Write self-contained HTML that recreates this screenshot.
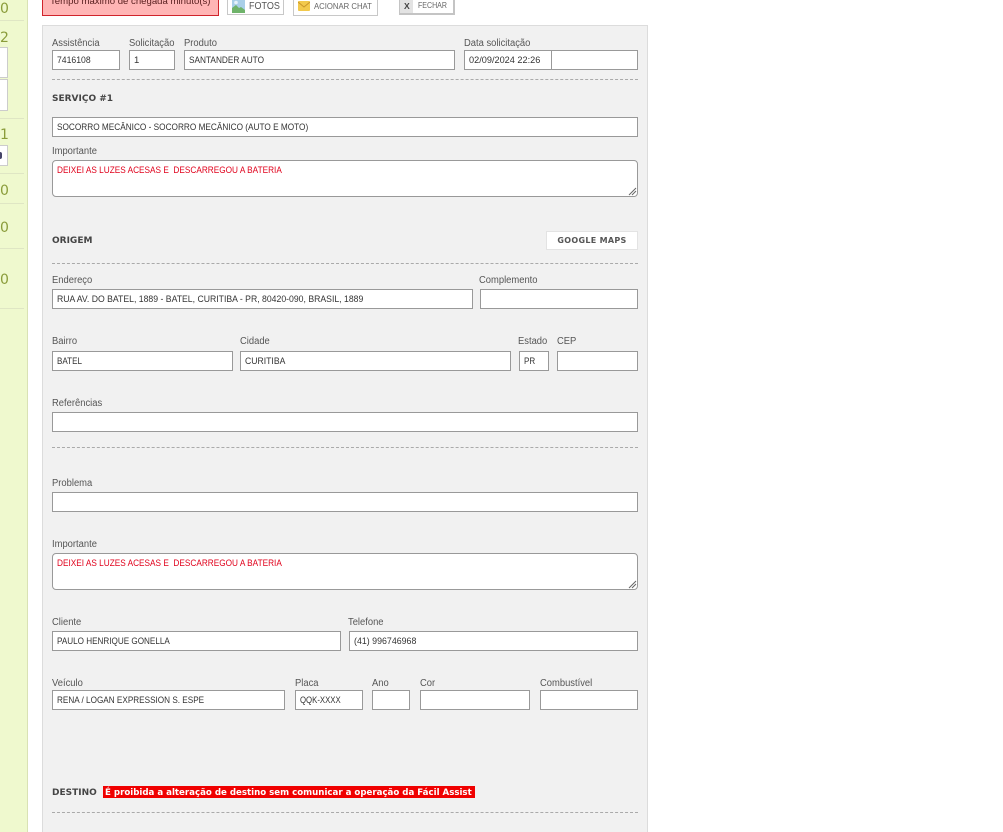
<!DOCTYPE html>
<html lang="pt-BR">
<head>
<meta charset="utf-8">
<title>Assistência</title>
<style>
html,body{margin:0;padding:0;background:#fff;width:1003px;height:832px;overflow:hidden;}
body{position:relative;font-family:"Liberation Sans",sans-serif;font-size:10px;color:#444;}
div{position:absolute;box-sizing:border-box;white-space:pre;}
span{display:inline-block;transform-origin:0 50%;white-space:pre;}
.l{height:12px;line-height:12px;font-size:10px;color:#555;transform:scaleX(.94);transform-origin:0 0;}
.i{height:20px;background:#fff;border:1px solid #999;line-height:20px;padding-left:4px;font-size:9.5px;color:#333;}
.t{background:#fff;border:1px solid #999;border-radius:4px;padding:4px 0 0 4px;line-height:12px;font-size:9.5px;color:#e0001b;}
.d{left:52px;width:586px;height:0;border-top:1px dashed #aaa;}
.h{left:52px;font-weight:bold;line-height:12px;height:12px;color:#444;font-family:"DejaVu Sans",sans-serif;font-size:9px;}
.n{left:0;font-size:14px;line-height:16px;color:#8a9c3a;width:9px;font-family:"DejaVu Sans",sans-serif;}
.s{left:0;width:24px;height:1px;background:#dfe6c4;}
.b{background:#fff;border:1px solid #c8c8c8;}
</style>
</head>
<body>
<!-- sidebar -->
<div style="left:0;top:0;width:28px;height:832px;background:#eff9ce;border-right:1px solid #d9e2b4;"></div>
<div class="n" style="top:1px">0</div>
<div class="s" style="top:20px"></div>
<div class="n" style="top:30px">2</div>
<div style="left:0;top:47px;width:8px;height:31px;background:#fff;border:1px solid #ccc;border-left:0;"></div>
<div style="left:0;top:79px;width:8px;height:32px;background:#fff;border:1px solid #ccc;border-left:0;"></div>
<div class="s" style="top:118px"></div>
<div class="n" style="top:127px">1</div>
<div style="left:0;top:145px;width:8px;height:21px;background:#fff;border:1px solid #ccc;border-left:0;"></div>
<div style="left:0;top:152px;width:2px;height:7px;background:#446;border-radius:0 4px 4px 0;"></div>
<div class="s" style="top:173px"></div>
<div class="n" style="top:183px">0</div>
<div class="s" style="top:203px"></div>
<div class="n" style="top:220px">0</div>
<div class="s" style="top:248px"></div>
<div class="n" style="top:272px">0</div>
<div class="s" style="top:308px"></div>

<!-- top bar -->
<div style="left:42px;top:-6px;width:177px;height:22px;background:#ffb5b5;border:1px solid #d0242c;line-height:14px;padding-left:7px;font-size:9.6px;color:#5a2020;">Tempo máximo de chegada minuto(s)</div>
<div class="b" style="left:227px;top:-4px;width:57px;height:19px;"></div>
<svg style="position:absolute;left:232px;top:-1px" width="13" height="14" viewBox="0 0 13 14"><rect width="13" height="14" fill="#a9cfe8"/><path d="M0 14V9l4-3 3 3 2-1 4 3v3z" fill="#6fb36a"/><circle cx="4" cy="3.500" r="1.800" fill="#e6f2fa"/></svg>
<div style="left:249px;top:0;height:12px;line-height:13px;font-size:10px;color:#555;transform:scaleX(.9);transform-origin:0 0;">FOTOS</div>
<div class="b" style="left:293px;top:-4px;width:85px;height:20px;"></div>
<svg style="position:absolute;left:298px;top:1px" width="12" height="10" viewBox="0 0 12 10"><rect width="12" height="10" rx="1" fill="#f2c94c"/><path d="M0 1l6 5 6-5" fill="none" stroke="#c9962a" stroke-width="1"/></svg>
<div style="left:314px;top:0;height:12px;line-height:12px;font-size:8.6px;color:#666;transform:scaleX(.9);transform-origin:0 0;">ACIONAR CHAT</div>
<div class="b" style="left:399px;top:-4px;width:56px;height:19px;border-color:#c4c4c4;border-width:1px 2px 2px 1px;"></div>
<div style="left:400px;top:0;width:13px;height:13px;background:#e3e3e3;"></div>
<div style="left:404px;top:0;height:12px;line-height:12px;font-size:8.6px;font-weight:bold;color:#444;">X</div>
<div style="left:418px;top:0;height:12px;line-height:12px;font-size:8px;color:#666;transform:scaleX(.88);transform-origin:0 0;">FECHAR</div>

<!-- panel -->
<div style="left:42px;top:25px;width:606px;height:807px;background:#f1f1f1;border:1px solid #dcdcdc;border-bottom:0;"></div>

<div class="l" style="left:52px;top:38px">Assistência</div>
<div class="l" style="left:129px;top:38px">Solicitação</div>
<div class="l" style="left:184px;top:38px">Produto</div>
<div class="l" style="left:464px;top:38px">Data solicitação</div>
<div class="i" style="left:52px;top:50px;width:68px"><span style="transform:scaleX(.91)">7416108</span></div>
<div class="i" style="left:129px;top:50px;width:46px">1</div>
<div class="i" style="left:184px;top:50px;width:271px"><span style="transform:scaleX(.87)">SANTANDER AUTO</span></div>
<div class="i" style="left:464px;top:50px;width:88px"><span style="transform:scaleX(.965)">02/09/2024 22:26</span></div>
<div class="i" style="left:551px;top:50px;width:87px"></div>
<div class="d" style="top:79px"></div>

<div class="h" style="top:93px">SERVIÇO #1</div>
<div class="i" style="left:52px;top:117px;width:586px"><span style="transform:scaleX(.868)">SOCORRO MECÂNICO - SOCORRO MECÂNICO (AUTO E MOTO)</span></div>
<div class="l" style="left:52px;top:146px">Importante</div>
<div class="t" style="left:52px;top:160px;width:586px;height:37px"><span style="transform:scaleX(.868)">DEIXEI AS LUZES ACESAS E  DESCARREGOU A BATERIA</span><svg style="position:absolute;right:0;bottom:0" width="9" height="9" viewBox="0 0 9 9"><path d="M1 8L8 1M4 8L8 4" stroke="#666" stroke-width="1" fill="none"/></svg></div>

<div class="h" style="top:235px">ORIGEM</div>
<div style="left:546px;top:231px;width:92px;height:19px;background:#fff;border:1px solid #e3e3e3;text-align:center;line-height:17px;font-family:'DejaVu Sans',sans-serif;font-weight:bold;font-size:8px;letter-spacing:.3px;color:#555;">GOOGLE MAPS</div>
<div class="d" style="top:263px"></div>

<div class="l" style="left:52px;top:275px">Endereço</div>
<div class="l" style="left:479px;top:275px">Complemento</div>
<div class="i" style="left:52px;top:289px;width:421px"><span style="transform:scaleX(.913)">RUA AV. DO BATEL, 1889 - BATEL, CURITIBA - PR, 80420-090, BRASIL, 1889</span></div>
<div class="i" style="left:480px;top:289px;width:158px"></div>

<div class="l" style="left:52px;top:336px">Bairro</div>
<div class="l" style="left:240px;top:336px">Cidade</div>
<div class="l" style="left:518px;top:336px">Estado</div>
<div class="l" style="left:557px;top:336px">CEP</div>
<div class="i" style="left:52px;top:351px;width:181px"><span style="transform:scaleX(.85)">BATEL</span></div>
<div class="i" style="left:240px;top:351px;width:271px"><span style="transform:scaleX(.91)">CURITIBA</span></div>
<div class="i" style="left:519px;top:351px;width:30px"><span style="transform:scaleX(.85)">PR</span></div>
<div class="i" style="left:557px;top:351px;width:81px"></div>

<div class="l" style="left:52px;top:398px">Referências</div>
<div class="i" style="left:52px;top:412px;width:586px"></div>
<div class="d" style="top:447px"></div>

<div class="l" style="left:52px;top:478px">Problema</div>
<div class="i" style="left:52px;top:492px;width:586px"></div>

<div class="l" style="left:52px;top:539px">Importante</div>
<div class="t" style="left:52px;top:553px;width:586px;height:37px"><span style="transform:scaleX(.868)">DEIXEI AS LUZES ACESAS E  DESCARREGOU A BATERIA</span><svg style="position:absolute;right:0;bottom:0" width="9" height="9" viewBox="0 0 9 9"><path d="M1 8L8 1M4 8L8 4" stroke="#666" stroke-width="1" fill="none"/></svg></div>

<div class="l" style="left:52px;top:617px">Cliente</div>
<div class="l" style="left:348px;top:617px">Telefone</div>
<div class="i" style="left:52px;top:631px;width:289px"><span style="transform:scaleX(.856)">PAULO HENRIQUE GONELLA</span></div>
<div class="i" style="left:349px;top:631px;width:289px"><span style="transform:scaleX(.93)">(41) 996746968</span></div>

<div class="l" style="left:52px;top:678px">Veículo</div>
<div class="l" style="left:295px;top:678px">Placa</div>
<div class="l" style="left:372px;top:678px">Ano</div>
<div class="l" style="left:420px;top:678px">Cor</div>
<div class="l" style="left:540px;top:678px">Combustível</div>
<div class="i" style="left:52px;top:690px;width:233px"><span style="transform:scaleX(.86)">RENA / LOGAN EXPRESSION S. ESPE</span></div>
<div class="i" style="left:295px;top:690px;width:68px"><span style="transform:scaleX(.82)">QQK-XXXX</span></div>
<div class="i" style="left:372px;top:690px;width:38px"></div>
<div class="i" style="left:420px;top:690px;width:110px"></div>
<div class="i" style="left:540px;top:690px;width:98px"></div>

<div class="h" style="top:787px">DESTINO</div>
<div style="left:103px;top:786px;width:372px;height:12px;background:#f00000;color:#fff;font-weight:bold;font-family:'DejaVu Sans',sans-serif;font-size:8.65px;line-height:14px;padding-left:2px;overflow:hidden;">É proibida a alteração de destino sem comunicar a operação da Fácil Assist</div>
<div class="d" style="top:812px"></div>
</body>
</html>
